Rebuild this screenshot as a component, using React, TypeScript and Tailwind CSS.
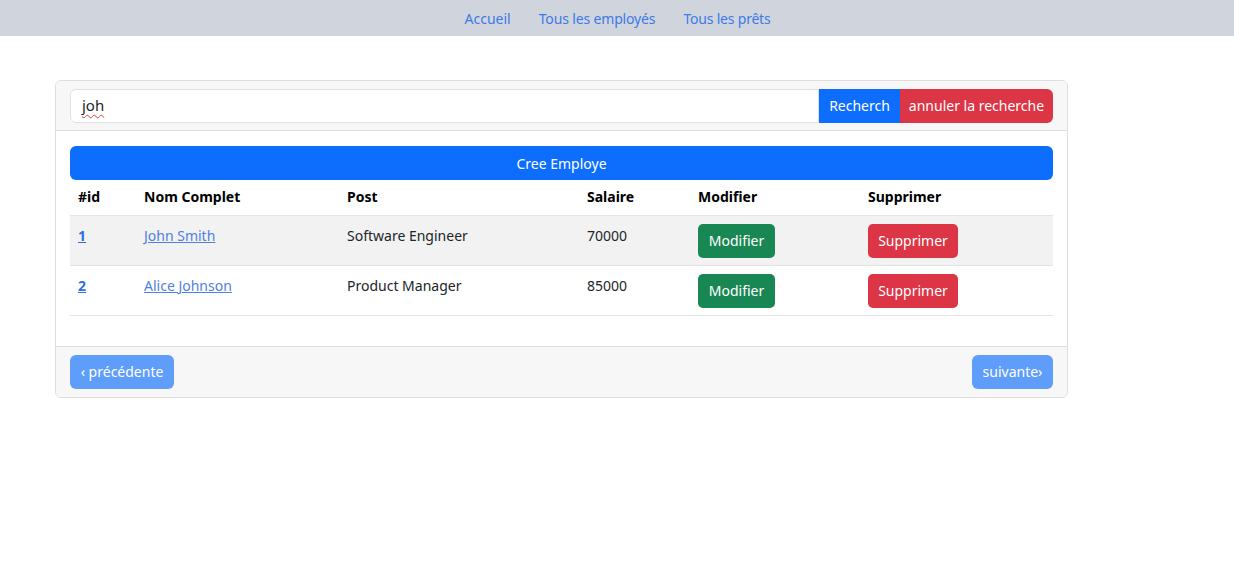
import React from "react";

const rows = [
  { id: 1, name: "John Smith", post: "Software Engineer", salaire: "70000" },
  { id: 2, name: "Alice Johnson", post: "Product Manager", salaire: "85000" },
];

export default function App() {
  return (
    <div className="min-h-[563px] bg-white text-[15px] text-[#212529]" style={{ fontFamily: '"Noto Sans", "Open Sans", sans-serif' }}>
      <nav className="h-[36px] bg-[#d0d5dd] flex items-center justify-center gap-[28px] pl-[1px]">
        <a className="text-[#3d7ae8] text-[14px]">Accueil</a>
        <a className="text-[#3d7ae8] text-[14px] tracking-[-0.15px]">Tous les employés</a>
        <a className="text-[#3d7ae8] text-[14px] tracking-[-0.2px]">Tous les prêts</a>
      </nav>
      <div className="pt-[44px] pl-[55px]">
        <div className="w-[1013px] border border-[#dedede] rounded-[6px] overflow-hidden">
          <div className="h-[50px] bg-[#f7f7f7] border-b border-[#dedede] flex items-center px-[14px]">
            <div className="flex-1 h-[34px] bg-white border border-[#dee2e6] rounded-l-[6px] flex items-center px-[11px]">
              <span className="underline decoration-wavy decoration-[#e04040] decoration-1 underline-offset-[3px]">joh</span>
            </div>
            <button className="h-[34px] w-[81px] bg-[#0d6efd] text-white text-[14px]">Recherch</button>
            <button className="h-[34px] w-[153px] bg-[#dc3545] text-white text-[14px] rounded-r-[6px]">annuler la recherche</button>
          </div>
          <div className="px-[14px] pt-[15px] pb-[30px] border-b border-[#dedede] bg-white">
            <button className="w-full h-[34px] bg-[#0d6efd] text-white text-[14px] rounded-[6px]">Cree Employe</button>
            <table className="w-full border-collapse text-left">
              <thead>
                <tr className="h-[35px] border-b border-[#e5e5e5]">
                  <th className="w-[66px] pl-[8px] pb-[1px] font-bold text-[14px] text-black">#id</th>
                  <th className="w-[203px] pl-[8px] pb-[1px] font-bold text-[14px] text-black">Nom Complet</th>
                  <th className="w-[240px] pl-[8px] pb-[1px] font-bold text-[14px] text-black">Post</th>
                  <th className="w-[111px] pl-[8px] pb-[1px] font-bold text-[14px] text-black">Salaire</th>
                  <th className="w-[170px] pl-[8px] pb-[1px] font-bold text-[14px] text-black">Modifier</th>
                  <th className="pl-[8px] pb-[1px] font-bold text-[14px] text-black">Supprimer</th>
                </tr>
              </thead>
              <tbody>
                {rows.map((r, i) => (
                  <tr key={r.id} className={`h-[50px] border-b border-[#e3e3e3] align-top ${i === 0 ? "bg-[#f2f2f2]" : "bg-white"}`}>
                    <td className="pl-[8px] pt-[9px] text-[14px]">
                      <a className="font-bold underline text-[#2e6fe0]">{r.id}</a>
                    </td>
                    <td className="pl-[8px] pt-[9px] text-[14px]">
                      <a className="underline text-[#4f80e3]">{r.name}</a>
                    </td>
                    <td className="pl-[8px] pt-[9px] text-[14px]">{r.post}</td>
                    <td className="pl-[8px] pt-[9px] text-[14px]">{r.salaire}</td>
                    <td className="pl-[8px] pt-[8px]">
                      <button className="h-[34px] w-[77px] bg-[#198754] text-white text-[14px] rounded-[5px]">Modifier</button>
                    </td>
                    <td className="pl-[8px] pt-[8px]">
                      <button className="h-[34px] w-[90px] bg-[#dc3545] text-white text-[14px] rounded-[5px]">Supprimer</button>
                    </td>
                  </tr>
                ))}
              </tbody>
            </table>
          </div>
          <div className="h-[50px] bg-[#f7f7f7] flex items-center justify-between px-[14px]">
            <button className="h-[34px] w-[104px] bg-[#5f9dfb] text-white text-[14px] rounded-[6px]">‹ précédente</button>
            <button className="h-[34px] w-[81px] bg-[#5f9dfb] text-white text-[14px] rounded-[6px]">suivante›</button>
          </div>
        </div>
      </div>
    </div>
  );
}
